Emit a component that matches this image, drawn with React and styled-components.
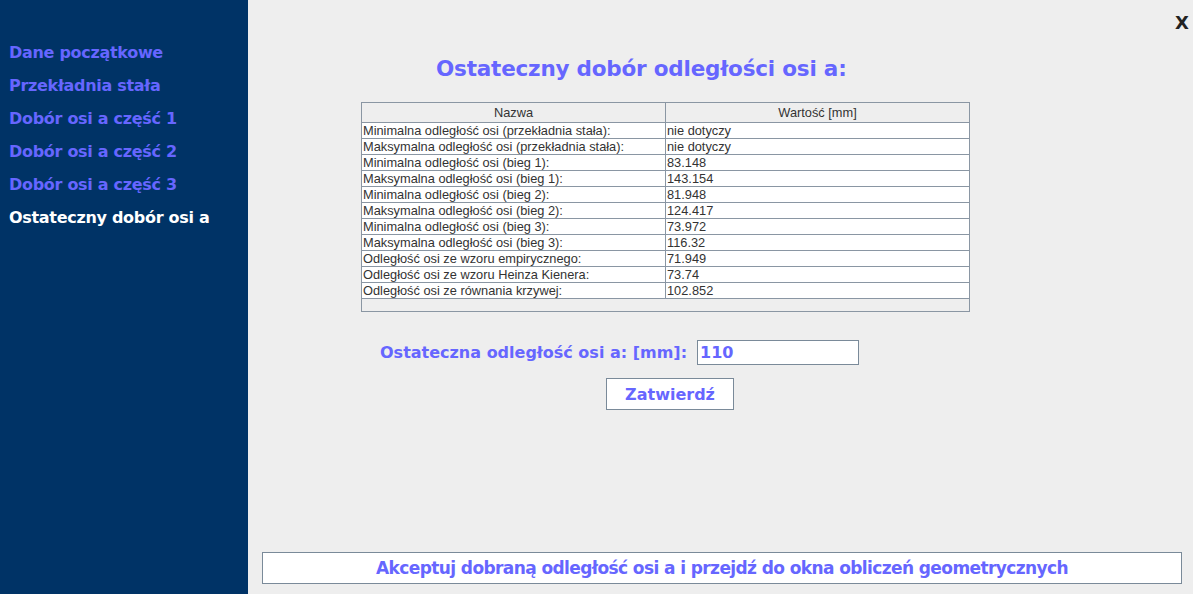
import React from 'react';
import styled, {createGlobalStyle} from 'styled-components';

const GlobalStyle = createGlobalStyle`
  html, body {
    margin: 0;
    padding: 0;
    background: #eeeeee;
  }
  #root {
    width: 1193px;
    height: 594px;
  }
`;

const Frame = styled.div`
  display: flex;
  width: 1193px;
  height: 594px;
  background: #eeeeee;
  font-family: Tahoma, "DejaVu Sans", sans-serif;
  overflow: hidden;
`;

const Sidebar = styled.nav`
  width: 248px;
  flex: none;
  background: #003366;
  padding-top: 41px;
  box-sizing: border-box;
  display: flex;
  flex-direction: column;
  gap: 9px;
`;

const NavItem = styled.div`
  padding-left: 9px;
  height: 24px;
  line-height: 24px;
  font-size: 16px;
  font-weight: bold;
  letter-spacing: -0.3px;
  color: ${({active}) => (active ? '#ffffff' : '#6666ff')};
  cursor: pointer;
`;

const Main = styled.main`
  flex: 1;
  display: flex;
  flex-direction: column;
  padding: 0 11px 10px 14px;
  box-sizing: border-box;
`;

const TopBar = styled.div`
  height: 44px;
  display: flex;
  justify-content: flex-end;
  align-items: center;
`;

const Close = styled.span`
  font-family: "DejaVu Sans", sans-serif;
  font-weight: bold;
  font-size: 18px;
  color: #222222;
  margin-right: -7px;
  cursor: pointer;
`;

const Title = styled.h1`
  margin: 10px 0 0 174px;
  font-size: 21.5px;
  font-weight: bold;
  letter-spacing: -0.2px;
  color: #6666ff;
  line-height: 30px;
`;

const TableBox = styled.div`
  margin: 18px 0 0 99px;
  width: 609px;
  height: 210px;
  border: 1px solid #8a96a3;
  box-sizing: border-box;
  background: #eeeeee;
`;

const Grid = styled.table`
  width: 100%;
  border-collapse: collapse;
  table-layout: fixed;
  font-family: "Liberation Sans", Arial, sans-serif;
  font-size: 12.8px;
  color: #333333;
`;

const HeadCell = styled.th`
  height: 19px;
  padding: 0;
  font-weight: normal;
  text-align: center;
  background: #eeeeee;
  border-right: 1px solid #8a96a3;
  border-bottom: 1px solid #8a96a3;
  &:last-child {
    border-right: none;
  }
`;

const Cell = styled.td`
  height: 15px;
  padding: 0 0 0 1px;
  line-height: 15px;
  background: #ffffff;
  white-space: nowrap;
  overflow: hidden;
  border-right: 1px solid #8a96a3;
  border-bottom: 1px solid #8a96a3;
  &:last-child {
    border-right: none;
  }
`;

const FormRow = styled.div`
  margin: 28px 0 0 118px;
  display: flex;
  align-items: center;
  gap: 12px;
`;

const Label = styled.label`
  font-size: 16px;
  font-weight: bold;
  color: #6666ff;
  width: 305px;
  white-space: nowrap;
`;

const Input = styled.input`
  width: 162px;
  height: 25px;
  box-sizing: border-box;
  border: 1px solid #7a8a99;
  padding: 0 2px;
  font-family: Tahoma, "DejaVu Sans", sans-serif;
  font-size: 16px;
  font-weight: bold;
  color: #6666ff;
  background: #ffffff;
  outline: none;
`;

const Button = styled.button`
  display: block;
  background: #ffffff;
  border: 1px solid #7a8a99;
  font-family: Tahoma, "DejaVu Sans", sans-serif;
  font-weight: bold;
  color: #6666ff;
  cursor: pointer;
  padding: 0;
`;

const ConfirmButton = styled(Button)`
  margin: 13px 0 0 344px;
  width: 128px;
  height: 32px;
  font-size: 16px;
`;

const Spacer = styled.div`
  flex: 1;
`;

const AcceptButton = styled(Button)`
  width: 920px;
  height: 32px;
  font-size: 17px;
  letter-spacing: -0.6px;
`;

const rows = [
  ['Minimalna odległość osi (przekładnia stała):', 'nie dotyczy'],
  ['Maksymalna odległość osi (przekładnia stała):', 'nie dotyczy'],
  ['Minimalna odległość osi (bieg 1):', '83.148'],
  ['Maksymalna odległość osi (bieg 1):', '143.154'],
  ['Minimalna odległość osi (bieg 2):', '81.948'],
  ['Maksymalna odległość osi (bieg 2):', '124.417'],
  ['Minimalna odległość osi (bieg 3):', '73.972'],
  ['Maksymalna odległość osi (bieg 3):', '116.32'],
  ['Odległość osi ze wzoru empirycznego:', '71.949'],
  ['Odległość osi ze wzoru Heinza Kienera:', '73.74'],
  ['Odległość osi ze równania krzywej:', '102.852'],
];

const nav = [
  'Dane początkowe',
  'Przekładnia stała',
  'Dobór osi a część 1',
  'Dobór osi a część 2',
  'Dobór osi a część 3',
  'Ostateczny dobór osi a',
];

export default function App() {
  return (
    <Frame>
      <GlobalStyle/>
      <Sidebar>
        {nav.map((item, i) => (
          <NavItem key={item} active={i === nav.length - 1}>{item}</NavItem>
        ))}
      </Sidebar>
      <Main>
        <TopBar>
          <Close>X</Close>
        </TopBar>
        <Title>Ostateczny dobór odległości osi a:</Title>
        <TableBox>
          <Grid>
            <thead>
              <tr>
                <HeadCell>Nazwa</HeadCell>
                <HeadCell>Wartość [mm]</HeadCell>
              </tr>
            </thead>
            <tbody>
              {rows.map(([name, value]) => (
                <tr key={name}>
                  <Cell>{name}</Cell>
                  <Cell>{value}</Cell>
                </tr>
              ))}
            </tbody>
          </Grid>
        </TableBox>
        <FormRow>
          <Label>Ostateczna odległość osi a: [mm]:</Label>
          <Input defaultValue="110"/>
        </FormRow>
        <ConfirmButton>Zatwierdź</ConfirmButton>
        <Spacer/>
        <AcceptButton>Akceptuj dobraną odległość osi a i przejdź do okna obliczeń geometrycznych</AcceptButton>
      </Main>
    </Frame>
  );
}
